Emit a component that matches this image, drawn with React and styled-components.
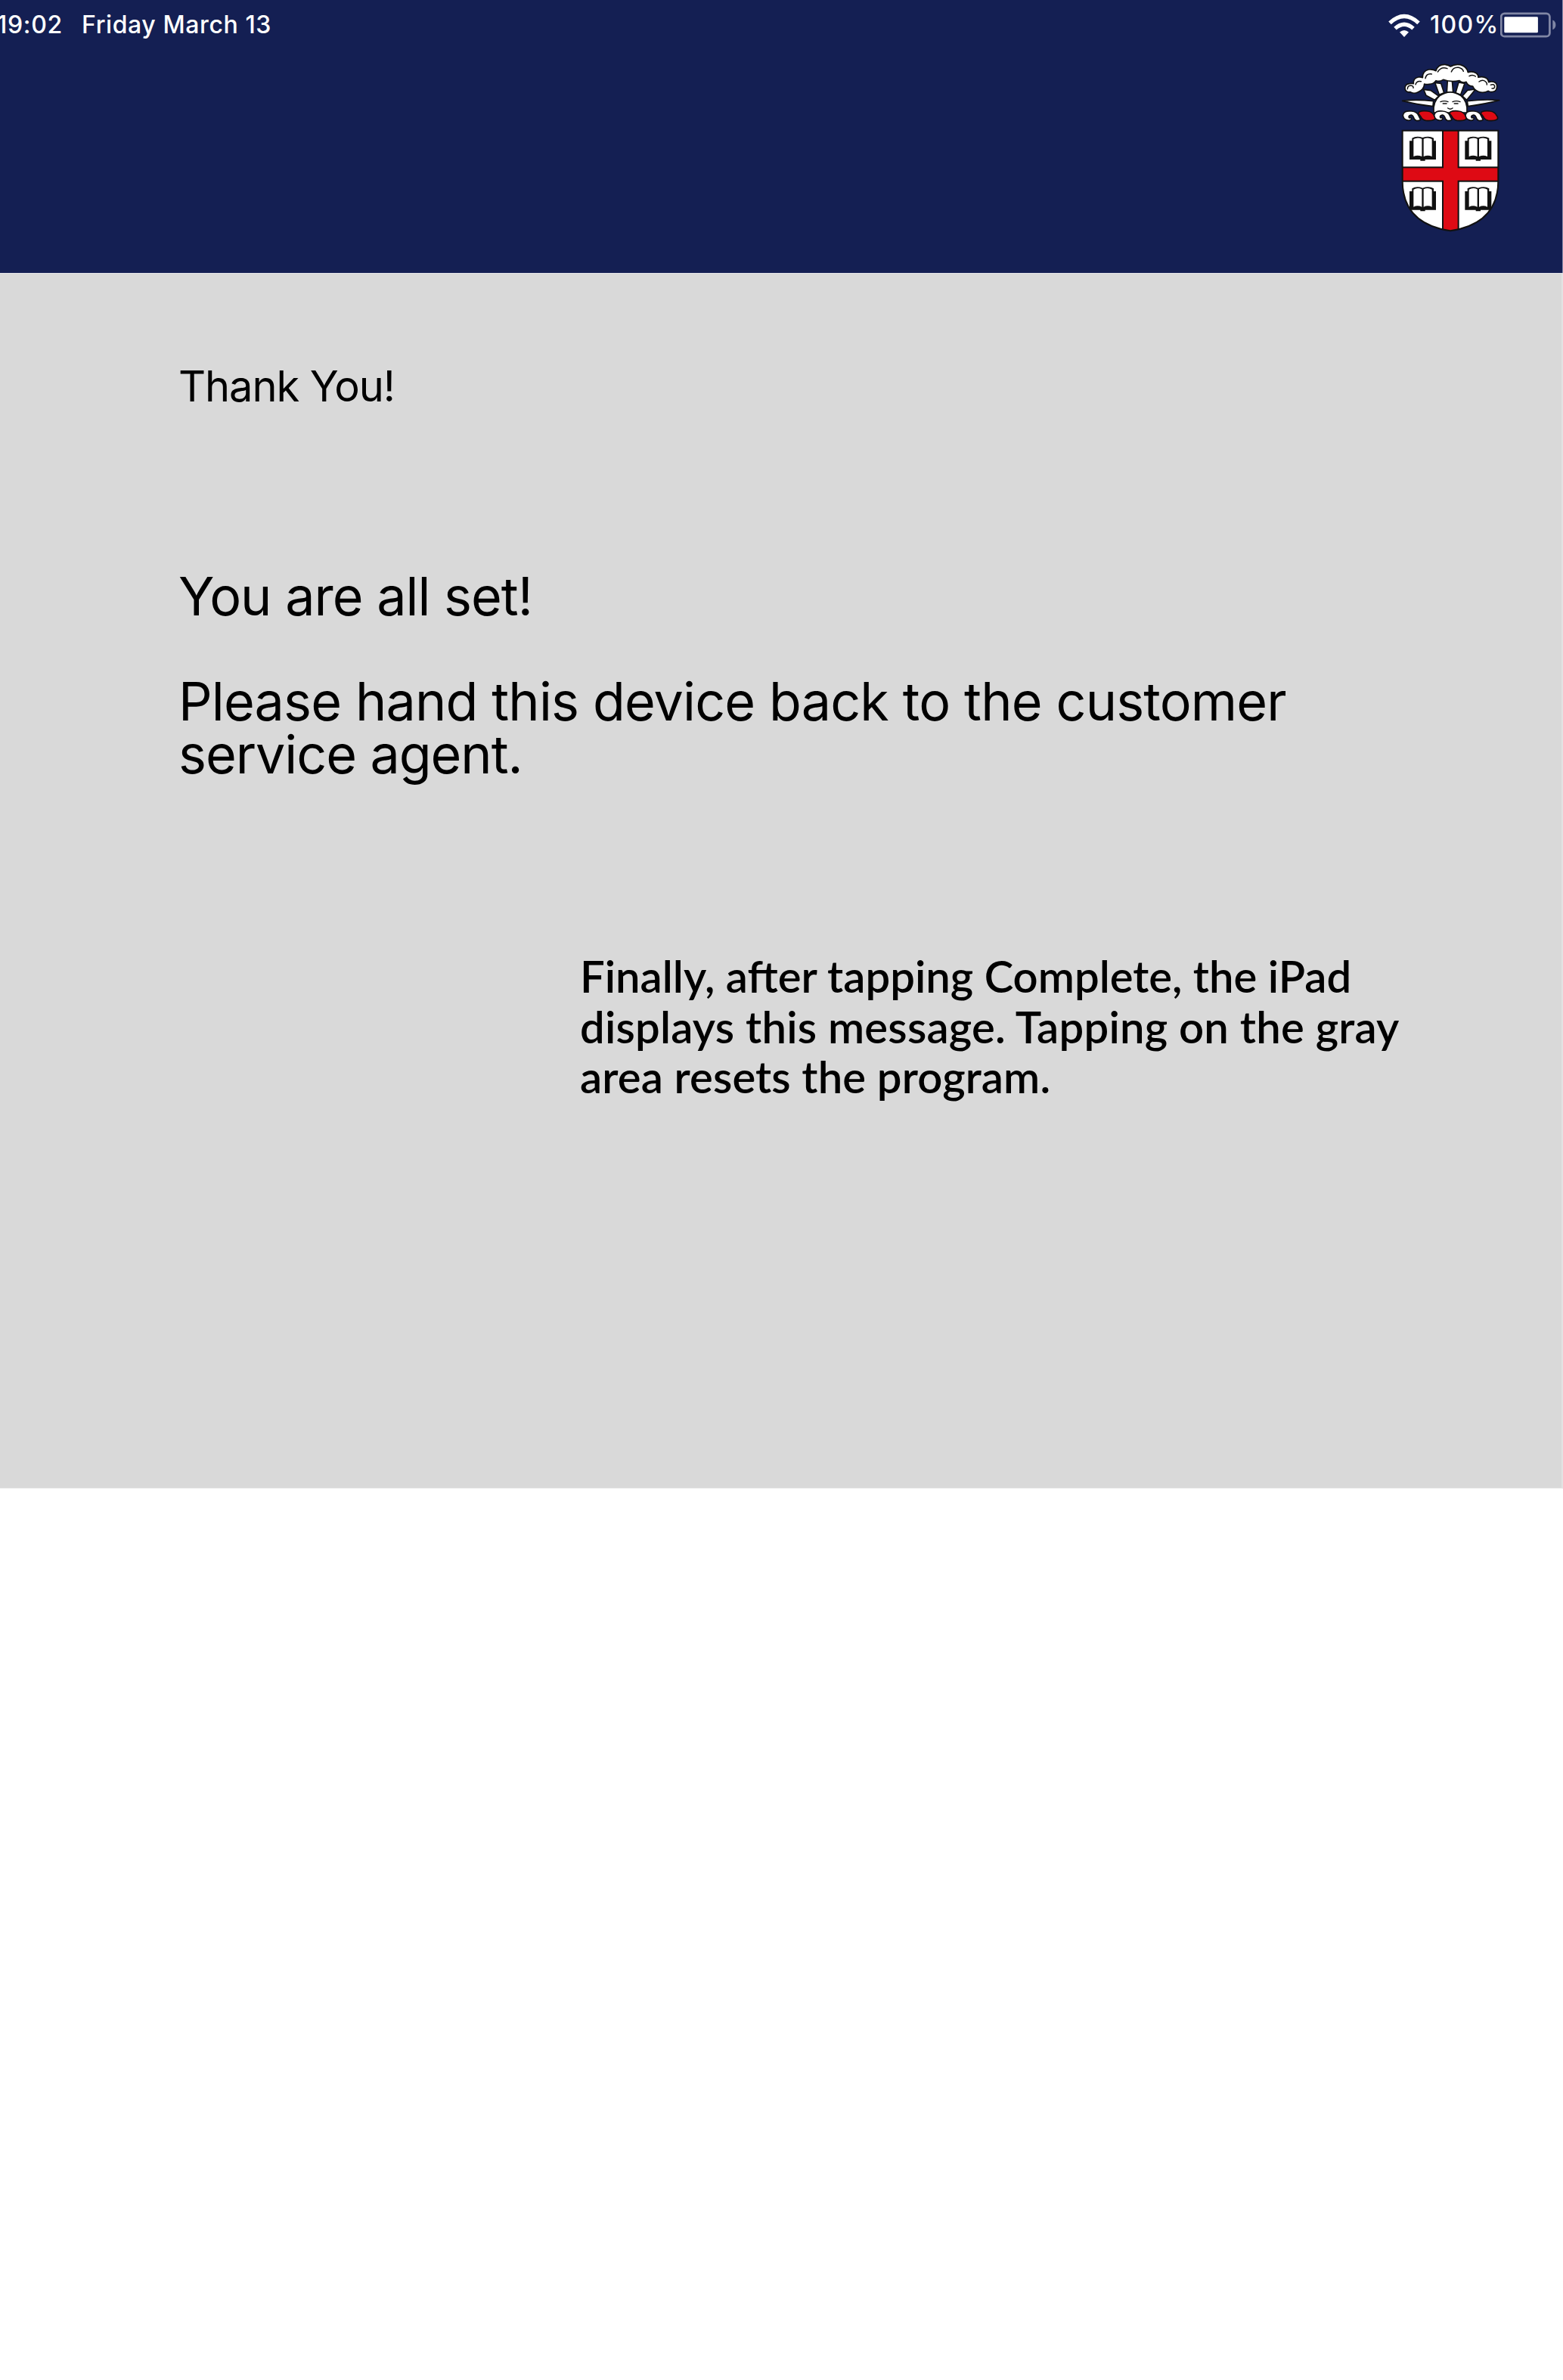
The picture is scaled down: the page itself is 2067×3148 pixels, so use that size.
import React from 'react';
import styled, { createGlobalStyle } from 'styled-components';

const GlobalStyle = createGlobalStyle`
  html, body { margin: 0; background: #fff; overflow: hidden; }
  *, *::before, *::after { box-sizing: border-box; }
`;

const Screen = styled.div`
  width: 2067px;
  min-height: 3148px;
  overflow: hidden;
  background: #fff;
  color: #000;
  font-family: Inter, "Liberation Sans", sans-serif;
`;

const Header = styled.header`
  height: 361px;
  display: flex;
  flex-direction: column;
  background: #141f53;
  border-right: 1px solid #8b8fae;
`;

const StatusBar = styled.div`
  height: 75px;
  padding: 14px 8px 0 0;
  display: flex;
  justify-content: space-between;
  align-items: flex-start;
  color: #fff;
  font-size: 32px;
  font-weight: 500;
  line-height: 38px;
  white-space: nowrap;
`;

const StatusGroup = styled.div`
  display: flex;
  align-items: flex-start;
`;

const Clock = styled.span`
  width: 112px;
  margin-left: -4px;
  letter-spacing: 0.7px;
`;

const DateLabel = styled.span`
  letter-spacing: 0.6px;
`;

const Percent = styled.span`
  width: 93px;
  margin-left: 13px;
  letter-spacing: 1.3px;
`;

const StatusIcon = styled.svg`
  display: block;
  flex: none;
  margin-top: ${p => p.$drop}px;
`;

const CrestRow = styled.div`
  display: flex;
  justify-content: flex-end;
  padding-right: 71px;
`;

const Message = styled.main`
  height: 1608px;
  padding: 115px 0 0 236px;
  background: #d9d9d9;
  border-top: 1px solid #e3e3e8;
  border-right: 2px solid #e2e2e2;
  border-bottom: 1px solid #ececec;
`;

const Title = styled.h1`
  margin: 0 0 209px;
  font-size: 56px;
  font-weight: 400;
  line-height: 68px;
  letter-spacing: -1.1px;
`;

const Paragraph = styled.p`
  margin: 0 0 69px;
  font-size: 70px;
  font-weight: 400;
  line-height: 70px;
  white-space: nowrap;
`;

const Note = styled.p`
  margin: 225px 0 0 531px;
  font-family: Lato, "Liberation Sans", sans-serif;
  font-size: 58px;
  font-weight: 600;
  line-height: 66.5px;
  white-space: nowrap;
`;

const Line = styled.span`
  display: block;
  letter-spacing: ${p => p.$spacing}px;
`;

const SHIELD = 'M44 293 H424 V492 C424 606 360 672 234 691 C108 672 44 606 44 492Z';
const BOOKS = [[72, 317], [292, 317], [72, 517], [292, 517]];
const TWISTS = [[46, false], [108, true], [170, false], [232, true], [294, false], [356, true]];

function Wifi() {
  return (
    <StatusIcon $drop={4} width="42" height="32" viewBox="0 0 42 32">
      <g fill="none" stroke="#fff" strokeWidth="5.2">
        <path d="M2 12.4 Q21 -5.2 40 12.4" />
        <path d="M9 19.6 Q21 9 33 19.6" />
      </g>
      <path d="M15 24.6 Q21 19.2 27 24.6 L21 31Z" fill="#fff" />
    </StatusIcon>
  );
}

function Battery() {
  return (
    <StatusIcon $drop={2} width="74" height="34" viewBox="0 0 74 34">
      <rect x="1.2" y="1.8" width="64.2" height="30.4" rx="4.5" fill="none" stroke="#8187a5" strokeWidth="2.8" />
      <rect x="5.3" y="6.3" width="44.6" height="21" rx="1.4" fill="#fff" />
      <path d="M69.3 10.6 Q73.4 12.4 73.4 17 Q73.4 21.6 69.3 23.2Z" fill="#8187a5" />
    </StatusIcon>
  );
}

function Book({ x, y }) {
  return (
    <g transform={`translate(${x} ${y})`}>
      <path d="M0 17 H10 V6 Q28 -5 52 4 Q78 -5 96 6 V17 H105 V91 H62 V96 H43 V91 H0Z" fill="#111" />
      <path d="M16 10 Q32 1 49 9 V79 Q32 71 16 79Z" fill="#fff" />
      <path d="M56 9 Q73 1 89 10 V79 Q73 71 56 79Z" fill="#fff" />
    </g>
  );
}

function Twist({ x, red }) {
  return (
    <path
      transform={`translate(${x} 0)`}
      d={red
        ? 'M2 219 Q16 213 36 216 Q54 218 62 234 Q70 244 62 250 Q50 256 28 253 Q14 250 9 238 Q4 230 -1 226Z'
        : 'M2 226 Q8 213 34 216 Q56 218 62 234 L70 250 Q62 256 52 253 Q44 250 42 240 Q38 228 27 233 Q20 238 26 243 Q30 240 34 244 Q34 253 22 253 Q6 251 2 240 Q-2 233 2 226Z'}
      fill={red ? '#de0a14' : '#fff'}
      stroke="#111"
      strokeWidth="5"
      strokeLinejoin="round"
    />
  );
}

function Crest() {
  return (
    <svg width="155" height="240" viewBox="0 0 465 720">
      <defs>
        <clipPath id="shield">
          <path d={SHIELD} />
        </clipPath>
      </defs>

      <g fill="#fff" stroke="#111" strokeWidth="5" strokeLinejoin="round">
        <path d="M44 175 Q100 169 167 176 L165 197 Q100 189 44 175Z" />
        <path d="M428 173 Q370 168 301 176 L304 197 Q372 188 428 173Z" />
        <path d="M128 130 L156 134 L188 156 L172 172 L138 154Z" />
        <path d="M173 103 L197 106 L209 143 L190 151Z" />
        <path d="M223 92 H241 L245 142 H220Z" />
        <path d="M267 102 L291 106 L275 151 L255 143Z" />
        <path d="M302 133 L334 129 L299 172 L282 156Z" />
        <path d="M168 222 Q164 178 192 155 Q234 126 276 155 Q304 178 300 222Z" />
        <path d="M55 130 Q51 109 72 107 Q80 105 88 107 Q86 85 107 81 Q118 80 124 83 Q123 57 148 51 Q165 49 177 56 Q184 30 213 31 Q228 33 235 39 Q251 28 274 32 Q300 40 304 62 Q322 56 338 66 Q346 73 345 82 Q363 76 378 86 Q387 94 386 101 Q404 94 416 106 Q424 122 412 136 Q397 144 385 136 Q366 146 346 139 Q328 131 323 117 Q304 118 297 100 Q283 106 270 95 Q236 102 206 91 Q190 101 177 95 Q168 109 150 109 Q138 111 131 108 Q130 131 105 141 Q88 149 75 140 Q60 143 55 130Z" />
      </g>

      <g fill="none" stroke="#111" strokeWidth="4.5" strokeLinecap="round">
        <path d="M64 128 Q64 113 79 115 Q88 116 87 124" />
        <path d="M96 110 Q101 94 118 98" />
        <path d="M135 86 Q139 66 160 69" />
        <path d="M184 60 Q198 37 222 47" />
        <path d="M238 60 Q246 40 267 43 Q283 47 286 58" />
        <path d="M309 77 Q322 69 334 78" />
        <path d="M348 99 Q362 89 374 99 Q381 105 379 111" />
        <path d="M394 112 Q407 106 410 117 Q410 128 399 126" />
      </g>

      <g fill="none" stroke="#111" strokeLinecap="round">
        <path d="M195 179 Q210 173 225 179 M243 179 Q258 173 273 179" strokeWidth="4" />
        <path d="M205 186 H219 M250 186 H264" strokeWidth="5" />
        <path d="M224 204 Q234 211 243 204" strokeWidth="4.5" />
      </g>

      {TWISTS.map(([x, red]) => <Twist key={x} x={x} red={red} />)}

      <g clipPath="url(#shield)">
        <rect x="40" y="290" width="390" height="410" fill="#de0a14" />
        <g fill="#fff" stroke="#111" strokeWidth="6">
          <rect x="40" y="290" width="164" height="149" />
          <rect x="266" y="290" width="164" height="149" />
          <rect x="40" y="494" width="164" height="210" />
          <rect x="266" y="494" width="164" height="210" />
        </g>
        {BOOKS.map(([x, y]) => <Book key={`${x}-${y}`} x={x} y={y} />)}
      </g>
      <path d={SHIELD} fill="none" stroke="#111" strokeWidth="6" />
    </svg>
  );
}

export default function App() {
  return (
    <Screen>
      <GlobalStyle />
      <Header>
        <StatusBar>
          <StatusGroup>
            <Clock>19:02</Clock>
            <DateLabel>Friday March 13</DateLabel>
          </StatusGroup>
          <StatusGroup>
            <Wifi />
            <Percent>100%</Percent>
            <Battery />
          </StatusGroup>
        </StatusBar>
        <CrestRow>
          <Crest />
        </CrestRow>
      </Header>
      <Message>
        <Title>Thank You!</Title>
        <Paragraph>
          <Line $spacing={-1}>You are all set!</Line>
        </Paragraph>
        <Paragraph>
          <Line $spacing={-0.85}>Please hand this device back to the customer</Line>
          <Line $spacing={-1.06}>service agent.</Line>
        </Paragraph>
        <Note>
          <Line $spacing={0}>Finally, after tapping Complete, the iPad</Line>
          <Line $spacing={0.22}>displays this message. Tapping on the gray</Line>
          <Line $spacing={0.12}>area resets the program.</Line>
        </Note>
      </Message>
    </Screen>
  );
}
